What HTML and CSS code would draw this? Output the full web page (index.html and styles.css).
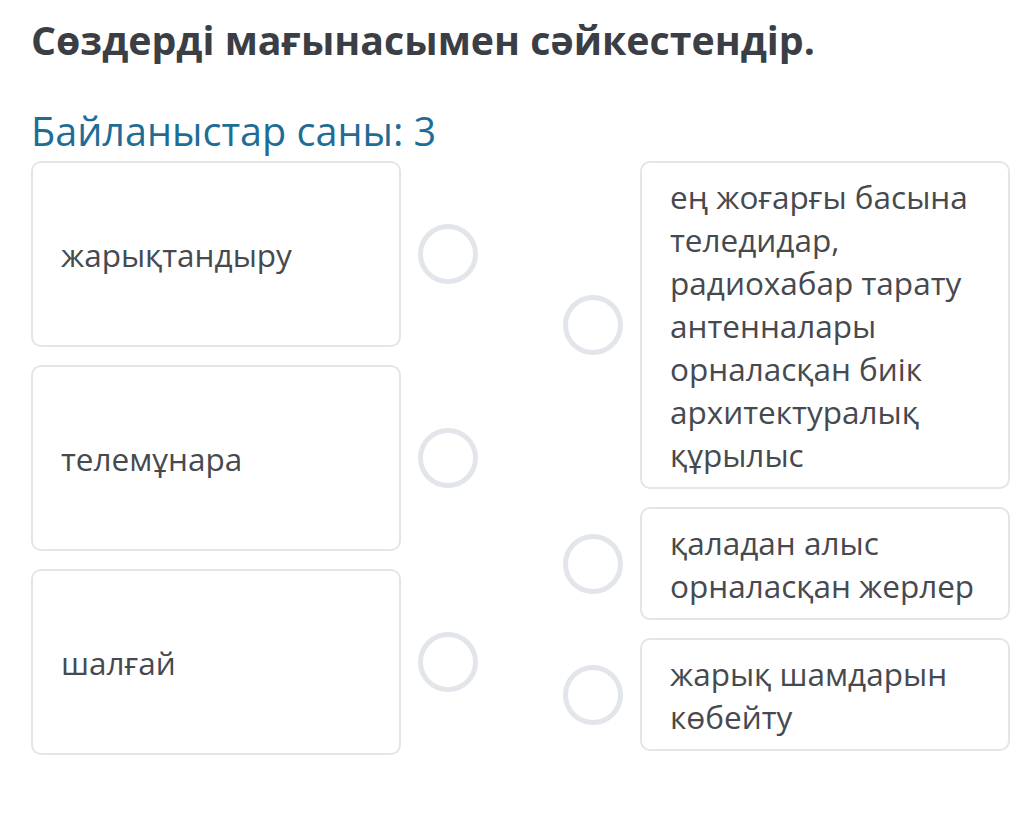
FILE: index.html
```html
<!DOCTYPE html>
<html lang="kk">
<head>
<meta charset="utf-8">
<link rel="stylesheet" href="styles.css">
</head>
<body>
<main class="page">
  <h1 class="title">Сөздерді мағынасымен сәйкестендір.</h1>
  <h2 class="count">Байланыстар саны: 3</h2>
  <div class="match">
    <div class="col col-left">
      <div class="row">
        <div class="card card-tall">жарықтандыру</div>
        <span class="dot"></span>
      </div>
      <div class="row">
        <div class="card card-tall">телемұнара</div>
        <span class="dot"></span>
      </div>
      <div class="row">
        <div class="card card-tall">шалғай</div>
        <span class="dot"></span>
      </div>
    </div>
    <div class="col col-right">
      <div class="row">
        <span class="dot"></span>
        <div class="card">ең жоғарғы басына теледидар, радиохабар тарату антенналары орналасқан биік архитектуралық құрылыс</div>
      </div>
      <div class="row">
        <span class="dot"></span>
        <div class="card">қаладан алыс орналасқан жерлер</div>
      </div>
      <div class="row">
        <span class="dot"></span>
        <div class="card">жарық шамдарын көбейту</div>
      </div>
    </div>
  </div>
</main>
</body>
</html>
```

FILE: styles.css
```css
* { box-sizing: border-box; }

html, body {
  margin: 0;
  padding: 0;
  background: #ffffff;
}

body {
  font-family: "Open Sans", "Noto Sans", sans-serif;
  color: #464a4f;
}

.page {
  padding: 12px 12px 0 31px;
}

.title {
  margin: 0;
  font-size: 39.3px;
  font-weight: 700;
  line-height: 56px;
  color: #3b3f45;
}

.count {
  margin: 38px 0 0;
  font-size: 39.6px;
  font-weight: 400;
  line-height: 50px;
  color: #1f6d97;
}

.match {
  margin-top: 5px;
  display: flex;
  justify-content: space-between;
}

.col {
  display: flex;
  flex-direction: column;
  gap: 18px;
}

.row {
  display: flex;
  align-items: center;
  gap: 17px;
}

.card {
  width: 370px;
  border: 2px solid #e4e5e7;
  border-radius: 10px;
  background: #fff;
  padding: 11.5px 20px 11.5px 28px;
  font-size: 31.5px;
  line-height: 43px;
  color: #464a4f;
}

.card-tall {
  height: 186px;
  display: flex;
  align-items: center;
}

.dot {
  flex: none;
  width: 60px;
  height: 60px;
  border: 5px solid #e2e5e9;
  border-radius: 50%;
  background: #fff;
}
```
